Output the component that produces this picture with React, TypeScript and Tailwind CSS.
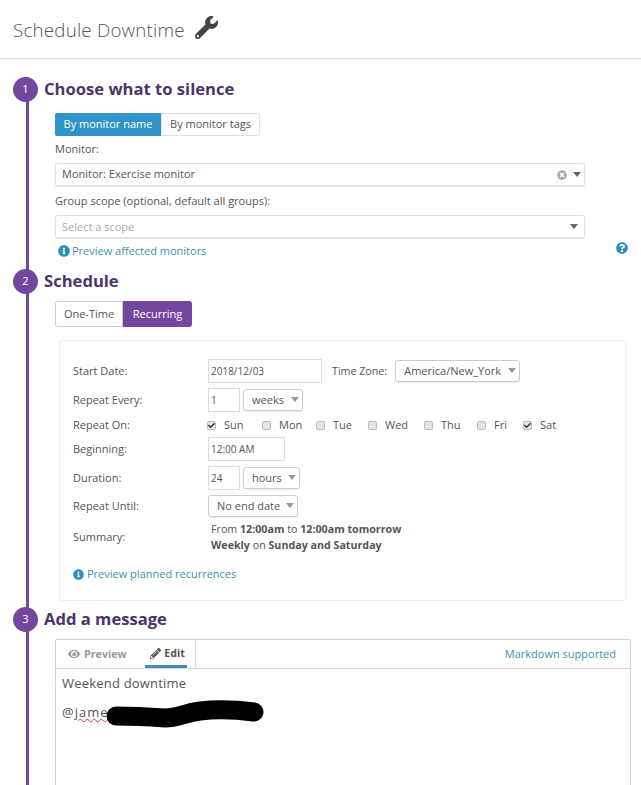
import { ReactNode } from 'react';
import { FaCheck, FaEye, FaInfoCircle, FaPencilAlt, FaQuestionCircle, FaTimesCircle, FaWrench } from 'react-icons/fa';

const days = [
  { name: 'Sun', checked: true, width: 'w-[55px]' },
  { name: 'Mon', checked: false, width: 'w-[54px]' },
  { name: 'Tue', checked: false, width: 'w-[52px]' },
  { name: 'Wed', checked: false, width: 'w-[56px]' },
  { name: 'Thu', checked: false, width: 'w-[53px]' },
  { name: 'Fri', checked: false, width: 'w-[46px]' },
  { name: 'Sat', checked: true, width: 'w-[40px]' },
];

function Caret() {
  return <span className="w-0 h-0 border-x-[4px] border-x-transparent border-t-[5px] border-t-[#666]" />;
}

function SmallCaret() {
  return <span className="w-0 h-0 -mt-[2px] border-x-[4px] border-x-transparent border-t-[5px] border-t-[#999]" />;
}

function StepHeading({ num, title }: { num: number; title: string }) {
  return (
    <div className="flex items-center gap-[6px] -ml-[16px] h-[25px]">
      <div className="w-[25px] h-[25px] rounded-full bg-[#74479f] text-white text-[11px] flex items-center justify-center">
        {num}
      </div>
      <h2 className="text-[16.6px] font-bold text-[#4d3468]">{title}</h2>
    </div>
  );
}

function Row({ label, className, children }: { label: string; className: string; children: ReactNode }) {
  return (
    <div className={`flex items-center ${className}`}>
      <div className="w-[135px] shrink-0">{label}</div>
      {children}
    </div>
  );
}

function Dropdown({ value, width }: { value: string; width: string }) {
  return (
    <div className={`h-[22px] ${width} border border-[#ccc] rounded-[3px] flex items-center justify-between pl-[8px] pr-[3px] shadow-[0_1px_1px_rgba(0,0,0,0.08)]`}>
      <span>{value}</span>
      <SmallCaret />
    </div>
  );
}

function TextBox({ value, width }: { value: string; width: string }) {
  return (
    <div className={`h-[24px] ${width} border border-[#ddd] flex items-center pl-[2px] text-[10px]`}>{value}</div>
  );
}

function Wide({ children, muted }: { children: ReactNode; muted?: boolean }) {
  return (
    <div className={`h-[23px] w-[530px] border border-[#e2e2e2] rounded-[2px] shadow-[0_1px_1px_rgba(0,0,0,0.1)] flex items-center justify-between pl-[6px] pr-[3px] text-[11px] ${muted ? 'text-[#aaa]' : ''}`}>
      {children}
    </div>
  );
}

export default function App() {
  return (
    <div className="h-[785px] overflow-hidden flex flex-col bg-white text-[#555] text-[11px] font-['Open_Sans',sans-serif]">
      <header className="h-[59px] shrink-0 border-b border-[#e4e4e4] shadow-[0_1px_1px_rgba(0,0,0,0.03)] flex items-center pl-[13px] pt-[3px]">
        <h1 className="text-[18.75px] font-light text-[#555] tracking-[0.2px]">Schedule Downtime</h1>
        <FaWrench className="ml-[10px] w-[23px] h-[23px] text-[#444] -mt-[6px]" />
      </header>

      <main className="flex-1 mt-[18px] ml-[26px] border-l-[3px] border-[#74479f] min-h-0">
        <StepHeading num={1} title="Choose what to silence" />
        <div className="pl-[26px]">
          <div className="mt-[11px] flex h-[23px] w-[205px]">
            <div className="w-[106px] bg-[#2f95c8] text-white rounded-l-[2px] flex items-center justify-center">By monitor name</div>
            <div className="w-[99px] border border-[#e2e2e2] rounded-r-[2px] flex items-center justify-center">By monitor tags</div>
          </div>
          <div className="h-[27px] flex items-center">Monitor:</div>
          <Wide>
            <span>Monitor: Exercise monitor</span>
            <span className="flex items-center gap-[6px]">
              <FaTimesCircle className="w-[10px] h-[10px] text-[#aaa]" />
              <Caret />
            </span>
          </Wide>
          <div className="h-[29px] flex items-center pt-[1px]">Group scope (optional, default all groups):</div>
          <Wide muted>
            <span className="pt-[1px]">Select a scope</span>
            <span className="mr-[3px] flex"><Caret /></span>
          </Wide>
          <div className="h-[26px] w-[573px] flex items-center justify-between pl-[3px]">
            <a className="flex items-center gap-[2px] text-[#3f8fb5]">
              <FaInfoCircle className="w-[12px] h-[12px] text-[#2f8dbd]" />
              Preview affected monitors
            </a>
            <FaQuestionCircle className="w-[12px] h-[12px] text-[#2f8dbd] -mt-[6px]" />
          </div>
        </div>

        <div className="mt-[5px]">
          <StepHeading num={2} title="Schedule" />
        </div>
        <div className="pl-[26px]">
          <div className="mt-[7px] flex h-[26px] w-[137px]">
            <div className="w-[68px] border border-[#ccc] rounded-l-[3px] flex items-center justify-center">One-Time</div>
            <div className="w-[69px] bg-[#74479f] text-white rounded-r-[3px] flex items-center justify-center">Recurring</div>
          </div>
          <section className="mt-[13px] ml-[4px] w-[568px] h-[261px] border border-[#eee] rounded-[3px] pt-[18px] pl-[13px]">
            <Row label="Start Date:" className="h-[24px]">
              <TextBox value="2018/12/03" width="w-[114px]" />
              <span className="ml-[10px] mr-[8px] text-[10.7px]">Time Zone:</span>
              <Dropdown value="America/New_York" width="w-[125px]" />
            </Row>
            <Row label="Repeat Every:" className="h-[24px] mt-[5px]">
              <TextBox value="1" width="w-[32px]" />
              <div className="ml-[3px]"><Dropdown value="weeks" width="w-[60px]" /></div>
            </Row>
            <Row label="Repeat On:" className="h-[25px] pt-[1px]">
              <div className="flex -ml-[1px]">
                {days.map((day) => (
                  <label key={day.name} className={`flex items-center gap-[8px] ${day.width}`}>
                    <span className="w-[9px] h-[9px] border border-[#bbb] bg-[#e4e4e4] rounded-[2px] flex items-center justify-center">
                      {day.checked && <FaCheck className="w-[7px] h-[7px] text-[#333]" />}
                    </span>
                    {day.name}
                  </label>
                ))}
              </div>
            </Row>
            <Row label="Beginning:" className="h-[24px]">
              <TextBox value="12:00 AM" width="w-[77px]" />
            </Row>
            <Row label="Duration:" className="h-[24px] mt-[5px]">
              <TextBox value="24" width="w-[32px]" />
              <div className="ml-[3px]"><Dropdown value="hours" width="w-[57px]" /></div>
            </Row>
            <Row label="Repeat Until:" className="h-[22px] mt-[5px]">
              <Dropdown value="No end date" width="w-[90px]" />
            </Row>
            <Row label="Summary:" className="h-[32px] mt-[4px]">
              <div className="pl-[3px] text-[10.7px] leading-[16px]">
                <div>From <b>12:00am</b> to <b>12:00am tomorrow</b></div>
                <div><b>Weekly</b> on <b>Sunday and Saturday</b></div>
              </div>
            </Row>
            <a className="mt-[14px] h-[14px] flex items-center gap-[3px] text-[#3f8fb5]">
              <FaInfoCircle className="w-[11px] h-[11px] text-[#2f8dbd]" />
              Preview planned recurrences
            </a>
          </section>
        </div>

        <div className="mt-[6px]">
          <StepHeading num={3} title="Add a message" />
        </div>
        <div className="pl-[26px]">
          <div className="mt-[7px] w-[576px] h-[200px] border border-[#d4d4d4] rounded-t-[2px]">
            <div className="h-[29px] border-b border-[#d8d8d8] flex justify-between">
              <div className="flex w-[140px] border-r border-[#ddd] font-bold text-[10.7px]">
                <div className="w-[89px] flex items-center gap-[4px] pl-[12px] text-[#999]">
                  <FaEye className="w-[12px] h-[12px]" />
                  Preview
                </div>
                <div className="w-[42px] flex items-center justify-center gap-[3px] border-b-[3px] border-[#3f8fb5] pt-[2px] pl-[3px]">
                  <FaPencilAlt className="w-[11px] h-[11px]" />
                  Edit
                </div>
              </div>
              <a className="flex items-center pr-[14px] text-[#3f8fb5]">Markdown supported</a>
            </div>
            <div className="relative pl-[6px] text-[13px] tracking-[0.2px] leading-[29px]">
              <div>Weekend downtime</div>
              <div className="tracking-[1px]">@<span className="underline decoration-wavy decoration-[#d33] decoration-1">james</span></div>
              {/* redaction scribble sitting on top of the text */}
              <svg className="absolute left-[50px] top-[30px]" width="160" height="30" viewBox="0 0 160 30" fill="none">
                <path
                  d="M10 17 C25 17 45 18 59 19 C72 19 78 14 94 12 C110 10 125 10 148 13"
                  stroke="#000"
                  strokeWidth="19"
                  strokeLinecap="round"
                />
              </svg>
            </div>
          </div>
        </div>
      </main>
    </div>
  );
}
